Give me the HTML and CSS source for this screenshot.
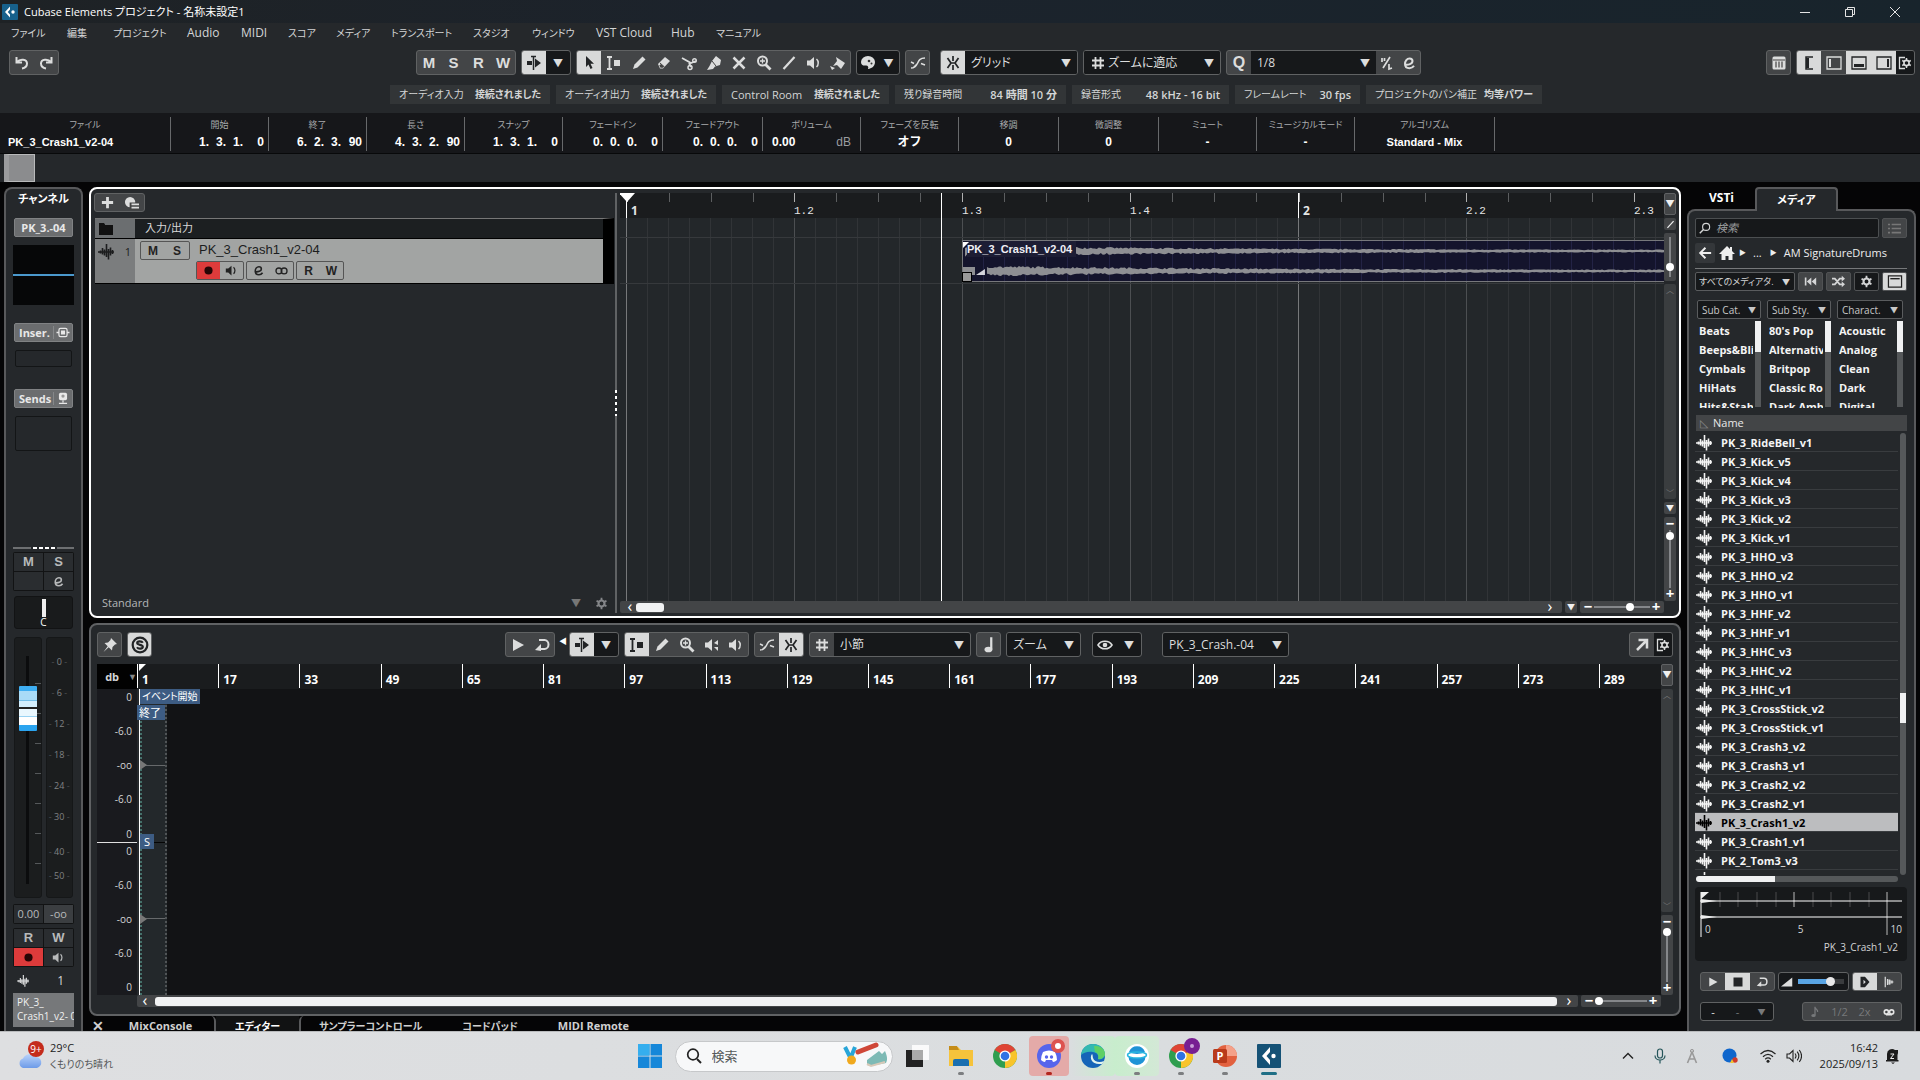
FILE: index.html
```html
<!DOCTYPE html>
<html lang="ja">
<head>
<meta charset="utf-8">
<title>Cubase Elements プロジェクト - 名称未設定1</title>
<link rel="stylesheet" href="styles.css">
</head>
<body>
<svg class="defs" aria-hidden="true">
  <symbol id="logo" viewBox="0 0 16 16"><rect width="16" height="16" rx="1" fill="#17618c"/><path d="M8 2.500 3 8l5 5.500V10.500L5.800 8 8 5.500z" fill="#fff"/><circle cx="11" cy="8" r="1.700" fill="#fff"/></symbol>
  <symbol id="undo" viewBox="0 0 16 16"><path d="M2.500 2v5.500H8M3 7c3-3.500 10-3 10 1.500 0 3-2.500 4.500-5 5" fill="none" stroke="currentColor" stroke-width="2"/></symbol>
  <symbol id="redo" viewBox="0 0 16 16"><path d="M13.500 2v5.500H8M13 7C10 3.500 3 4 3 8.500c0 3 2.500 4.500 5 5" fill="none" stroke="currentColor" stroke-width="2"/></symbol>
  <symbol id="autoscroll" viewBox="0 0 16 16"><path d="M1 6h5v4H1zM9 3.500 15 8l-6 4.500z" fill="currentColor"/><path d="M5 1.500h5M7.500 1v14" stroke="currentColor" stroke-width="1.500"/></symbol>
  <symbol id="arrow" viewBox="0 0 16 16"><path d="M5 1v11l2.500-2.500L9.500 14l2-1-2-4.200H13z" fill="currentColor"/></symbol>
  <symbol id="range" viewBox="0 0 16 16"><path d="M1 2h5M1 14h5M3.500 2v12" stroke="currentColor" stroke-width="1.800"/><path d="M8 5h6v6H8z" fill="currentColor"/></symbol>
  <symbol id="pencil" viewBox="0 0 16 16"><path d="M2 14l1.500-4.500L11.500 1.500 14.500 4.500 6.500 12.500z" fill="currentColor"/></symbol>
  <symbol id="eraser" viewBox="0 0 16 16"><path d="M2 9 9 2l5 4-7 7.500H4z" fill="currentColor"/><path d="M4 8 8.500 12" stroke="#444" stroke-width="1"/><path d="M5 9l3 2.500-1 1.200H4.600L3.300 10.500z" fill="#444"/></symbol>
  <symbol id="scissors" viewBox="0 0 16 16"><path d="M1 3l9 5 5-2M8 8l2 4" fill="none" stroke="currentColor" stroke-width="1.800"/><circle cx="9" cy="12.500" r="2" fill="none" stroke="currentColor" stroke-width="1.500"/><circle cx="13.500" cy="5.500" r="1.800" fill="none" stroke="currentColor" stroke-width="1.400"/></symbol>
  <symbol id="glue" viewBox="0 0 16 16"><path d="M6 6l4-5 5 4-1 5-5 1.500L7 14l-6 1 2.500-4z" fill="currentColor"/><path d="M6 6l4 5" stroke="#444" stroke-width="1"/></symbol>
  <symbol id="cross" viewBox="0 0 16 16"><path d="M2.500 2.500l11 11M13.500 2.500l-11 11" stroke="currentColor" stroke-width="2.500"/></symbol>
  <symbol id="zoom" viewBox="0 0 16 16"><circle cx="6.500" cy="6" r="4.500" fill="none" stroke="currentColor" stroke-width="2"/><path d="M9.500 9.500 14.500 14.500" stroke="currentColor" stroke-width="2.800"/><path d="M4 6h5M6.500 3.500v5" stroke="currentColor" stroke-width="1.300"/></symbol>
  <symbol id="line" viewBox="0 0 16 16"><path d="M2.500 14 13.500 2" stroke="currentColor" stroke-width="2.200"/></symbol>
  <symbol id="speaker" viewBox="0 0 16 16"><path d="M1 5.500h3L8 2v12l-4-3.500H1z" fill="currentColor"/><path d="M10.500 4c2.300 2 2.300 6 0 8" fill="none" stroke="currentColor" stroke-width="1.500"/></symbol>
  <symbol id="scrub" viewBox="0 0 16 16"><path d="M1 5.500h3L8 2v12l-4-3.500H1z" fill="currentColor"/><path d="M10 6l4-3v5zM10 10h4v4z" fill="currentColor"/></symbol>
  <symbol id="bucket" viewBox="0 0 16 16"><path d="M6 2l9 6-4 6-4-4-4 1 4-5z" fill="currentColor"/><path d="M0 11l5 2-3 2z" fill="currentColor"/></symbol>
  <symbol id="palette" viewBox="0 0 16 16"><path d="M1 7a7 6 0 0 1 14 0c0 5-5 7-7 7 1-2-.5-4-2.500-3.500S1 10 1 7z" fill="currentColor"/><circle cx="9" cy="6" r="1.300" fill="#333"/><circle cx="11.500" cy="8.500" r="1" fill="#333"/></symbol>
  <symbol id="xfade" viewBox="0 0 16 16"><path d="M1 13c9 0 4-10 14-10M1 7l3 1.500M11 8.500 15 10M3 13l4-4" fill="none" stroke="currentColor" stroke-width="1.500"/></symbol>
  <symbol id="snap" viewBox="0 0 16 16"><path d="M8 1v5M8 10v5M2.500 3 6 8l-3.500 5M13.500 3 10 8l3.500 5M6 8h4" fill="none" stroke="currentColor" stroke-width="1.700"/></symbol>
  <symbol id="hash" viewBox="0 0 16 16"><path d="M5.500 2v12M10.500 2v12M2 5.500h12M2 10.500h12" stroke="currentColor" stroke-width="1.800"/></symbol>
  <symbol id="edit" viewBox="0 0 16 16"><path d="M3.500 9.500c4 .5 8-.5 8-3.500 0-2-1.700-2.600-3-2.600C6 3.400 4 6 4 9s2 4.200 4.500 4.200c2 0 3.500-1 4.500-2.500" fill="none" stroke="currentColor" stroke-width="2"/></symbol>
  <symbol id="iq" viewBox="0 0 16 16"><path d="M4 13 11 2M3 3v4M5.500 3v3M10 9v5l3-1" stroke="currentColor" stroke-width="1.700" fill="none"/></symbol>
  <symbol id="rack" viewBox="0 0 16 16"><rect x="1.500" y="1.500" width="13" height="13" rx="1.500" fill="currentColor"/><path d="M2 5h12M5 6.500v6M8 6.500v6M11 6.500v6" stroke="#444" stroke-width="1.200"/></symbol>
  <symbol id="zleftbar" viewBox="0 0 16 16"><path d="M12 2H5v12h7" fill="none" stroke="currentColor" stroke-width="1.500"/><path d="M5 3h3v10H5z" fill="currentColor"/></symbol>
  <symbol id="zleft" viewBox="0 0 16 16"><path d="M1 2h14v12H1z" fill="none" stroke="currentColor" stroke-width="1.300"/><path d="M3 4h2v8H3z" fill="currentColor"/></symbol>
  <symbol id="zlow" viewBox="0 0 16 16"><path d="M1 2h14v12H1z" fill="none" stroke="currentColor" stroke-width="1.300"/><path d="M3 9h10v3H3z" fill="currentColor"/></symbol>
  <symbol id="zright" viewBox="0 0 16 16"><path d="M1 2h14v12H1z" fill="none" stroke="currentColor" stroke-width="1.300"/><path d="M11 4h2v8h-2z" fill="currentColor"/></symbol>
  <symbol id="setup" viewBox="0 0 16 16"><path d="M8 2.500H2.500v11H8" fill="none" stroke="currentColor" stroke-width="1.300"/><circle cx="9.500" cy="8" r="2.600" fill="none" stroke="currentColor" stroke-width="1.600"/><path d="M9.500 3v2.500M9.500 10.500V13M5.200 5.500l2.100 1.200M11.700 9.300l2.100 1.200M5.200 10.500l2.100-1.200M11.700 6.700l2.100-1.200" stroke="currentColor" stroke-width="1.500"/></symbol>
  <symbol id="gear" viewBox="0 0 16 16"><circle cx="8" cy="8" r="3.700" fill="none" stroke="currentColor" stroke-width="2.600"/><path d="M8 1v3M8 12v3M1.900 4.500l2.600 1.500M11.500 10l2.600 1.500M1.900 11.500l2.600-1.500M11.500 6l2.600-1.500" stroke="currentColor" stroke-width="2.200"/></symbol>
  <symbol id="plus" viewBox="0 0 16 16"><path d="M8 2v12M2 8h12" stroke="currentColor" stroke-width="3"/></symbol>
  <symbol id="preset" viewBox="0 0 16 16"><circle cx="6.500" cy="7.500" r="5.500" fill="currentColor"/><path d="M6 8h10v8H6z" fill="#444"/><path d="M8 10h8M8 13.500h8" stroke="currentColor" stroke-width="2"/></symbol>
  <symbol id="folder" viewBox="0 0 16 16"><path d="M1 3V2h5l1 1.500v.5h8v10H1z" fill="currentColor"/></symbol>
  <symbol id="wave" viewBox="0 0 16 16"><path d="M0 8h16M2.500 6.500v3M4.500 4v6.500M6.500 5.500v6M8.500 0v13M10.500 5v10.500M12.500 3.500v8M14.500 6v4" stroke="currentColor" stroke-width="1.600" fill="none"/></symbol>
  <symbol id="rec" viewBox="0 0 16 16"><circle cx="8" cy="8" r="5" fill="currentColor"/></symbol>
  <symbol id="stereo" viewBox="0 0 16 16"><circle cx="4.800" cy="8.500" r="3.600" fill="none" stroke="currentColor" stroke-width="1.600"/><circle cx="11.200" cy="8.500" r="3.600" fill="none" stroke="currentColor" stroke-width="1.600"/></symbol>
  <symbol id="insert" viewBox="0 0 16 16"><rect x="3" y="3" width="10" height="10" rx="2" fill="none" stroke="currentColor" stroke-width="1.500"/><path d="M5.500 5.500h5v5h-5zM0 7h3v2H0zM13 7h3v2h-3z" fill="currentColor"/></symbol>
  <symbol id="send" viewBox="0 0 16 16"><rect x="3" y="1" width="10" height="9" rx="2" fill="currentColor"/><path d="M8 10v3M3 14h10" stroke="currentColor" stroke-width="1.500"/><circle cx="8" cy="5" r="2" fill="#999"/></symbol>
  <symbol id="pin" viewBox="0 0 16 16"><path d="M9 1l6 6-2 .5-2.500 2.500-.5 3.500L6.700 10.300 1.500 15 5.700 9.300 2.500 6 6 5.500 8.500 3z" fill="currentColor"/></symbol>
  <symbol id="solo" viewBox="0 0 16 16"><circle cx="8" cy="8" r="6.500" fill="none" stroke="currentColor" stroke-width="2"/><path d="M10.500 6C9.500 4.300 5.500 4.300 5.500 6.300s5 1.200 5 3.300-4 2.200-5.200.4" fill="none" stroke="currentColor" stroke-width="1.900"/></symbol>
  <symbol id="play" viewBox="0 0 16 16"><path d="M3 2l11 6-11 6z" fill="currentColor"/></symbol>
  <symbol id="stop" viewBox="0 0 16 16"><path d="M2 2h12v12H2z" fill="currentColor"/></symbol>
  <symbol id="loop" viewBox="0 0 16 16"><path d="M5 3h5.500a4 4.500 0 0 1 0 9H5" fill="none" stroke="currentColor" stroke-width="2"/><path d="M7 7v7l-6-1z" fill="currentColor"/></symbol>
  <symbol id="note" viewBox="0 0 16 16"><path d="M10 1v11" stroke="currentColor" stroke-width="2"/><ellipse cx="7.500" cy="12" rx="3.500" ry="2.500" fill="currentColor"/></symbol>
  <symbol id="eighth" viewBox="0 0 16 16"><path d="M8 1v11M8 2c1 3 4 2 3.500 6" stroke="currentColor" stroke-width="1.700" fill="none"/><ellipse cx="6" cy="12.500" rx="3" ry="2" fill="currentColor"/></symbol>
  <symbol id="eye" viewBox="0 0 16 16"><path d="M1 8c3-5 11-5 14 0-3 5-11 5-14 0z" fill="none" stroke="currentColor" stroke-width="1.600"/><circle cx="8" cy="8" r="2.300" fill="currentColor"/></symbol>
  <symbol id="open" viewBox="0 0 16 16"><path d="M3 13 12 4M4.500 3h8.500v8.500" fill="none" stroke="currentColor" stroke-width="2.500"/></symbol>
  <symbol id="search" viewBox="0 0 16 16"><circle cx="9.500" cy="6.500" r="4.700" fill="none" stroke="currentColor" stroke-width="1.500"/><path d="M6 10 1 15" stroke="currentColor" stroke-width="1.800"/></symbol>
  <symbol id="list" viewBox="0 0 16 16"><path d="M0 3h2.500M4.500 3H16M0 8h2.500M4.500 8H16M0 13h2.500M4.500 13H16" stroke="currentColor" stroke-width="2"/></symbol>
  <symbol id="back" viewBox="0 0 16 16"><path d="M8.500 2 2.500 8l6 6M2.500 8H15" fill="none" stroke="currentColor" stroke-width="2.200"/></symbol>
  <symbol id="home" viewBox="0 0 16 16"><path d="M8 1 0 9h2.500v6h4v-4h3v4h4V9H16l-3-3V2h-2v2z" fill="currentColor"/></symbol>
  <symbol id="rewind" viewBox="0 0 16 16"><path d="M1 3h2v10H1zM9 3v10L3.500 8zM15 3v10L9.500 8z" fill="currentColor"/></symbol>
  <symbol id="shuffle" viewBox="0 0 16 16"><path d="M0 4.500h3.500l6 7H13M0 11.500h3.500l6-7H13" fill="none" stroke="currentColor" stroke-width="2.200"/><path d="M12 1l4 3.500L12 8zM12 8l4 3.500-4 3.500z" fill="currentColor"/></symbol>
  <symbol id="windowic" viewBox="0 0 16 16"><path d="M1 2h14v12H1z" fill="none" stroke="currentColor" stroke-width="1.300"/><path d="M3 5h10" stroke="currentColor" stroke-width="1.500"/></symbol>
  <symbol id="ramp" viewBox="0 0 16 16"><path d="M0 14h15V2z" fill="currentColor"/></symbol>
  <symbol id="autoplay" viewBox="0 0 16 16"><path d="M2 1h6l6 7-6 7H2zM6 5v6l3-3z" fill="currentColor" fill-rule="evenodd"/></symbol>
  <symbol id="beats" viewBox="0 0 16 16"><path d="M3 1v14M6 4v8M9 4.500v7M12 6v4" stroke="currentColor" stroke-width="1.600" fill="none"/><path d="M6 4l9 4-9 4z" fill="currentColor" opacity=".6"/></symbol>
  <symbol id="tape" viewBox="0 0 16 16"><circle cx="4.500" cy="8" r="2.800" fill="none" stroke="currentColor" stroke-width="2.200"/><circle cx="11.500" cy="8" r="2.800" fill="none" stroke="currentColor" stroke-width="2.200"/><path d="M4 11.500h8" stroke="currentColor" stroke-width="2"/></symbol>
  <symbol id="chrome" viewBox="0 0 24 24"><circle cx="12" cy="12" r="12" fill="#2f9e4f"/><path d="M12 12 1.600 6A12 12 0 0 1 22.400 6z" fill="#df4435"/><path d="M12 12 22.400 6A12 12 0 0 1 12 24z" fill="#f8c42b"/><circle cx="12" cy="12" r="5.600" fill="#fff"/><circle cx="12" cy="12" r="4.300" fill="#2f72e4"/></symbol>
</svg>

<header class="titlebar">
  <svg class="ic"><use href="#logo"/></svg>
  <h1>Cubase Elements プロジェクト - 名称未設定1</h1>
  <div class="winbtns">
    <button aria-label="最小化"><svg viewBox="0 0 10 10"><path d="M0 5.500h10"/></svg></button>
    <button aria-label="元に戻す"><svg viewBox="0 0 10 10"><path d="M.5 2.500h7v7h-7zM2.500 2.500v-2h7v7h-2"/></svg></button>
    <button aria-label="閉じる"><svg viewBox="0 0 10 10"><path d="M0 0l10 10M10 0 0 10"/></svg></button>
  </div>
</header>
<nav class="menubar">
  <a href="#">ファイル</a><a href="#">編集</a><a href="#">プロジェクト</a><a href="#" class="lat">Audio</a><a href="#" class="lat">MIDI</a><a href="#">スコア</a><a href="#">メディア</a><a href="#">トランスポート</a><a href="#">スタジオ</a><a href="#">ウィンドウ</a><a href="#" class="lat">VST Cloud</a><a href="#" class="lat">Hub</a><a href="#">マニュアル</a>
</nav>

<div class="toolbar">
  <div class="grp"><button aria-label="元に戻す"><svg class="ic"><use href="#undo"/></svg></button><button aria-label="やり直す"><svg class="ic"><use href="#redo"/></svg></button></div>
  <div class="tools">
    <div class="grp bold"><button>M</button><button>S</button><button>R</button><button>W</button></div>
    <div class="grp dark"><button class="on" aria-label="オートスクロール"><svg class="ic"><use href="#autoscroll"/></svg></button><button class="tri">▼</button></div>
    <div class="grp pick">
      <button class="on" aria-label="選択"><svg class="ic"><use href="#arrow"/></svg></button><button aria-label="範囲"><svg class="ic"><use href="#range"/></svg></button><button aria-label="鉛筆"><svg class="ic"><use href="#pencil"/></svg></button><button aria-label="消しゴム"><svg class="ic"><use href="#eraser"/></svg></button><button aria-label="はさみ"><svg class="ic"><use href="#scissors"/></svg></button><button aria-label="のり"><svg class="ic"><use href="#glue"/></svg></button><button aria-label="ミュート"><svg class="ic"><use href="#cross"/></svg></button><button aria-label="ズーム"><svg class="ic"><use href="#zoom"/></svg></button><button aria-label="ライン"><svg class="ic"><use href="#line"/></svg></button><button aria-label="再生"><svg class="ic"><use href="#speaker"/></svg></button><button aria-label="カラー"><svg class="ic"><use href="#bucket"/></svg></button>
    </div>
    <div class="grp dark color"><button aria-label="カラーメニュー"><svg class="ic"><use href="#palette"/></svg></button><button class="tri">▼</button></div>
    <div class="grp"><button aria-label="ゼロクロス"><svg class="ic"><use href="#xfade"/></svg></button></div>
    <div class="grp dark snapg"><button class="on" aria-label="スナップ"><svg class="ic"><use href="#snap"/></svg></button><label class="sel w112"><select aria-label="スナップ形式"><option>グリッド</option></select></label></div>
    <div class="grp dark"><label class="sel w138"><svg class="ic"><use href="#hash"/></svg><select aria-label="グリッドの間隔"><option>ズームに適応</option></select></label></div>
    <div class="grp"><button class="q">Q</button><label class="sel w125"><select aria-label="クオンタイズ"><option>1/8</option></select></label><button class="sm" aria-label="反復クオンタイズ"><svg class="ic"><use href="#iq"/></svg></button><button class="sm" aria-label="クオンタイズパネル"><svg class="ic"><use href="#edit"/></svg></button></div>
  </div>
  <div class="tools right">
    <div class="grp"><button aria-label="チャンネルラック"><svg class="ic"><use href="#rack"/></svg></button></div>
    <div class="grp"><button class="on" aria-label="チャンネル"><svg class="ic"><use href="#zleftbar"/></svg></button><button aria-label="左ゾーン"><svg class="ic"><use href="#zleft"/></svg></button><button class="on" aria-label="下ゾーン"><svg class="ic"><use href="#zlow"/></svg></button><button class="on" aria-label="右ゾーン"><svg class="ic"><use href="#zright"/></svg></button><button class="set" aria-label="設定"><svg class="ic"><use href="#setup"/></svg></button></div>
  </div>
</div>

<div class="status">
  <div><span>オーディオ入力</span><b>接続されました</b></div>
  <div><span>オーディオ出力</span><b>接続されました</b></div>
  <div><span class="lat">Control Room</span><b>接続されました</b></div>
  <div><span>残り録音時間</span><b class="lat">84 時間 10 分</b></div>
  <div><span>録音形式</span><b class="lat">48 kHz - 16 bit</b></div>
  <div><span>フレームレート</span><b class="lat">30 fps</b></div>
  <div><span>プロジェクトのパン補正</span><b>均等パワー</b></div>
</div>

<div class="info">
  <div class="l"><span>ファイル</span><b>PK_3_Crash1_v2-04</b></div>
  <div class="n"><span>開始</span><b><i>1.</i><i>3.</i><i>1.</i><i>0</i></b></div>
  <div class="n"><span>終了</span><b><i>6.</i><i>2.</i><i>3.</i><i>90</i></b></div>
  <div class="n"><span>長さ</span><b><i>4.</i><i>3.</i><i>2.</i><i>90</i></b></div>
  <div class="n"><span>スナップ</span><b><i>1.</i><i>3.</i><i>1.</i><i>0</i></b></div>
  <div class="n"><span>フェードイン</span><b><i>0.</i><i>0.</i><i>0.</i><i>0</i></b></div>
  <div class="n"><span>フェードアウト</span><b><i>0.</i><i>0.</i><i>0.</i><i>0</i></b></div>
  <div class="v"><span>ボリューム</span><b>0.00<em>dB</em></b></div>
  <div><span>フェーズを反転</span><b>オフ</b></div>
  <div><span>移調</span><b>0</b></div>
  <div><span>微調整</span><b>0</b></div>
  <div><span>ミュート</span><b>-</b></div>
  <div><span>ミュージカルモード</span><b>-</b></div>
  <div class="alg"><span>アルゴリズム</span><b>Standard - Mix</b></div>
</div>
<div class="overview"><div class="view"></div></div>

<main>
  <aside class="channel">
    <h2>チャンネル</h2>
    <button class="tag">PK_3.-04</button>
    <div class="eq"></div>
    <button class="tag split"><span>Inser.</span><svg class="ic"><use href="#insert"/></svg></button>
    <div class="slot"></div>
    <button class="tag split sends"><span>Sends</span><svg class="ic"><use href="#send"/></svg></button>
    <div class="slot tall"></div>
    <div class="grip"><i></i><u></u><i></i></div>
    <div class="quad"><button>M</button><button>S</button><button aria-label="空き"></button><button aria-label="編集"><svg class="ic"><use href="#edit"/></svg></button></div>
    <div class="pan"><i></i><span>C</span></div>
    <div class="faders">
      <div class="fader"><input type="range" aria-label="ボリューム" min="0" max="100" value="84"></div>
      <div class="meter"><span>0</span><span>6</span><span>12</span><span>18</span><span>24</span><span>30</span><span class="f">40</span><span>50</span></div>
    </div>
    <div class="quad vals"><span>0.00</span><span class="pk">-oo</span></div>
    <div class="quad rw"><button>R</button><button>W</button><button class="rec" aria-label="録音可能"><svg class="ic"><use href="#rec"/></svg></button><button aria-label="モニター"><svg class="ic"><use href="#speaker"/></svg></button></div>
    <div class="chno"><svg class="ic"><use href="#wave"/></svg><span>1</span></div>
    <div class="chname">PK_3_<br>Crash1_v2- 0</div>
  </aside>

  <div class="center">
    <section class="project">
      <div class="tracks">
        <div class="grp add"><button aria-label="トラックを追加"><svg class="ic"><use href="#plus"/></svg></button><button aria-label="プリセット"><svg class="ic"><use href="#preset"/></svg></button></div>
        <div class="row io"><div class="num"><svg class="ic"><use href="#folder"/></svg></div><span>入力/出力</span></div>
        <div class="row trk">
          <div class="num"><svg class="ic"><use href="#wave"/></svg><span>1</span></div>
          <div class="ms tb"><button>M</button><button>S</button></div>
          <div class="det"><div class="nm">PK_3_Crash1_v2-04</div>
            <div class="btns"><div class="tb"><button class="rec" aria-label="録音"><svg class="ic"><use href="#rec"/></svg></button><button aria-label="モニター"><svg class="ic"><use href="#speaker"/></svg></button></div><div class="tb"><button aria-label="編集"><svg class="ic"><use href="#edit"/></svg></button><button aria-label="ステレオ"><svg class="ic"><use href="#stereo"/></svg></button></div><div class="tb"><button>R</button><button>W</button></div></div>
          </div>
        </div>
        <div class="foot"><span>Standard</span><b>▼</b><svg class="ic"><use href="#gear"/></svg></div>
      </div>
      <div class="divider"></div>
      <div class="arrange">
        <div class="ruler"><b>1</b><span>1.2</span><span>1.3</span><span>1.4</span><b>2</b><span>2.2</span><span>2.3</span></div>
        <div class="canvas">
          <div class="event"><svg id="clip" viewBox="0 0 702 40" preserveAspectRatio="none"></svg><span>PK_3_Crash1_v2-04</span></div>
        </div>
        <div class="hbar"><div class="hscroll"><i>‹</i><u></u><i>›</i></div><button class="drop">▼</button><div class="hz"><i>−</i><input type="range" aria-label="横ズーム" value="66"><i>+</i></div></div>
        <div class="playhead"></div>
      </div>
      <div class="vbar">
        <button class="drop tall">▼</button><button class="drop" aria-label="鉛筆"><svg class="ic"><use href="#line"/></svg></button>
        <div class="vz first"><input type="range" aria-label="波形ズーム" value="20"></div>
        <div class="vscroll"><i>︿</i><i>﹀</i></div>
        <button class="drop">▼</button>
        <div class="vz z"><i>−</i><input type="range" aria-label="縦ズーム" value="96"><i>+</i></div>
      </div>
    </section>

    <section class="editor">
      <div class="etools">
        <div class="grp"><button aria-label="ピン"><svg class="ic"><use href="#pin"/></svg></button></div>
        <div class="grp"><button class="on" aria-label="ソロ"><svg class="ic big"><use href="#solo"/></svg></button></div>
        <div class="mid">
          <div class="grp"><button aria-label="再生"><svg class="ic"><use href="#play"/></svg></button><button aria-label="ループ"><svg class="ic"><use href="#loop"/></svg></button></div><i class="volt">◀</i>
          <div class="grp dark"><button class="on" aria-label="オートスクロール"><svg class="ic"><use href="#autoscroll"/></svg></button><button class="tri">▼</button></div>
          <div class="grp"><button class="on" aria-label="範囲"><svg class="ic"><use href="#range"/></svg></button><button aria-label="鉛筆"><svg class="ic"><use href="#pencil"/></svg></button><button aria-label="ズーム"><svg class="ic"><use href="#zoom"/></svg></button><button aria-label="スクラブ"><svg class="ic"><use href="#scrub"/></svg></button><button aria-label="試聴"><svg class="ic"><use href="#speaker"/></svg></button></div>
          <div class="grp"><button aria-label="ゼロクロス"><svg class="ic"><use href="#xfade"/></svg></button><button class="on" aria-label="スナップ"><svg class="ic"><use href="#snap"/></svg></button></div>
          <div class="grp"><button aria-label="グリッド"><svg class="ic"><use href="#hash"/></svg></button><label class="sel w138"><select aria-label="小節"><option>小節</option></select></label></div>
          <div class="grp"><button aria-label="音符"><svg class="ic big"><use href="#note"/></svg></button></div>
          <div class="grp"><label class="sel w75"><select aria-label="ズーム"><option>ズーム</option></select></label></div>
          <div class="grp dark eye"><button aria-label="表示"><svg class="ic"><use href="#eye"/></svg></button><button class="tri">▼</button></div>
          <div class="grp file"><label class="sel w125"><select aria-label="クリップ"><option>PK_3_Crash.-04</option></select></label></div>
        </div>
        <div class="grp end"><button aria-label="別ウィンドウ"><svg class="ic"><use href="#open"/></svg></button><button class="set" aria-label="設定"><svg class="ic"><use href="#setup"/></svg></button></div>
      </div>
      <div class="ebody">
        <div class="scale">
          <div class="db">db<b>▼</b></div>
          <div class="vals"><span>0</span><span>-6.0</span><span>-oo</span><span>-6.0</span><span>0</span></div>
          <div class="vals second"><span>0</span><span>-6.0</span><span>-oo</span><span>-6.0</span><span>0</span></div>
        </div>
        <div class="sample">
          <div class="bars"><span>1</span><span>17</span><span>33</span><span>49</span><span>65</span><span>81</span><span>97</span><span>113</span><span>129</span><span>145</span><span>161</span><span>177</span><span>193</span><span>209</span><span>225</span><span>241</span><span>257</span><span>273</span><span class="last">289</span></div>
          <div class="wavearea">
            <div class="region"><div class="lane"></div><div class="lane"></div></div>
            <span class="mk start">イベント開始</span><span class="mk stop">終了</span><span class="mk s">S</span>
          </div>
          <div class="hbar"><div class="hscroll full"><i>‹</i><u></u><i>›</i></div><div class="hz"><i>−</i><input type="range" aria-label="横ズーム" value="0"><i>+</i></div></div>
        </div>
        <div class="vbar">
          <button class="drop tall">▼</button>
          <div class="vscroll"><i>︿</i><i>﹀</i></div>
          <div class="vz z"><i>−</i><input type="range" aria-label="縦ズーム" value="100"><i>+</i></div>
        </div>
      </div>
    </section>

    <nav class="tabs"><button class="x">✕</button><a href="#" class="t1 lat">MixConsole</a><a href="#" class="cur">エディター</a><div class="rest"><a href="#">サンプラーコントロール</a><a href="#">コードパッド</a><a href="#" class="lat">MIDI Remote</a></div></nav>
  </div>

  <aside class="media">
    <div class="mtabs"><a href="#">VSTi</a><a href="#" class="cur">メディア</a></div>
    <div class="mbody">
      <div class="line"><label class="search"><svg class="ic"><use href="#search"/></svg><input type="text" placeholder="検索" aria-label="検索"></label><div class="mb dim"><button aria-label="一覧"><svg class="ic"><use href="#list"/></svg></button></div></div>
      <div class="path"><button aria-label="戻る"><svg class="ic"><use href="#back"/></svg></button><svg class="ic home"><use href="#home"/></svg><i>▶</i><span>...</span><i>▶</i><span>AM SignatureDrums</span></div>
      <div class="line types"><label class="sel box"><select aria-label="メディアタイプ"><option>すべてのメディアタ.</option></select></label><div class="mb"><button aria-label="先頭"><svg class="ic"><use href="#rewind"/></svg></button></div><div class="mb"><button aria-label="シャッフル"><svg class="ic"><use href="#shuffle"/></svg></button></div><div class="mb dk"><button aria-label="設定"><svg class="ic"><use href="#gear"/></svg></button></div><div class="mb lit"><button aria-label="フィルター"><svg class="ic big"><use href="#windowic"/></svg></button></div></div>
      <div class="filters">
        <div><label class="sel box"><select aria-label="Sub Category"><option>Sub Cat.</option></select></label><ul><li>Beats</li><li>Beeps&amp;Blips</li><li>Cymbals</li><li>HiHats</li><li>Hits&amp;Stabs</li></ul></div>
        <div><label class="sel box"><select aria-label="Sub Style"><option>Sub Sty.</option></select></label><ul><li>80's Pop</li><li>Alternative</li><li>Britpop</li><li>Classic Rock</li><li>Dark Ambient</li></ul></div>
        <div><label class="sel box"><select aria-label="Character"><option>Charact.</option></select></label><ul><li>Acoustic</li><li>Analog</li><li>Clean</li><li>Dark</li><li>Digital</li></ul></div>
      </div>
      <div class="results">
        <div class="rhead"><i>◺</i>Name</div>
        <div class="rwrap">
          <div class="rlist"><table><tbody>
            <tr><td><svg class="ic"><use href="#wave"/></svg></td><td>PK_3_RideBell_v1</td></tr>
            <tr><td><svg class="ic"><use href="#wave"/></svg></td><td>PK_3_Kick_v5</td></tr>
            <tr><td><svg class="ic"><use href="#wave"/></svg></td><td>PK_3_Kick_v4</td></tr>
            <tr><td><svg class="ic"><use href="#wave"/></svg></td><td>PK_3_Kick_v3</td></tr>
            <tr><td><svg class="ic"><use href="#wave"/></svg></td><td>PK_3_Kick_v2</td></tr>
            <tr><td><svg class="ic"><use href="#wave"/></svg></td><td>PK_3_Kick_v1</td></tr>
            <tr><td><svg class="ic"><use href="#wave"/></svg></td><td>PK_3_HHO_v3</td></tr>
            <tr><td><svg class="ic"><use href="#wave"/></svg></td><td>PK_3_HHO_v2</td></tr>
            <tr><td><svg class="ic"><use href="#wave"/></svg></td><td>PK_3_HHO_v1</td></tr>
            <tr><td><svg class="ic"><use href="#wave"/></svg></td><td>PK_3_HHF_v2</td></tr>
            <tr><td><svg class="ic"><use href="#wave"/></svg></td><td>PK_3_HHF_v1</td></tr>
            <tr><td><svg class="ic"><use href="#wave"/></svg></td><td>PK_3_HHC_v3</td></tr>
            <tr><td><svg class="ic"><use href="#wave"/></svg></td><td>PK_3_HHC_v2</td></tr>
            <tr><td><svg class="ic"><use href="#wave"/></svg></td><td>PK_3_HHC_v1</td></tr>
            <tr><td><svg class="ic"><use href="#wave"/></svg></td><td>PK_3_CrossStick_v2</td></tr>
            <tr><td><svg class="ic"><use href="#wave"/></svg></td><td>PK_3_CrossStick_v1</td></tr>
            <tr><td><svg class="ic"><use href="#wave"/></svg></td><td>PK_3_Crash3_v2</td></tr>
            <tr><td><svg class="ic"><use href="#wave"/></svg></td><td>PK_3_Crash3_v1</td></tr>
            <tr><td><svg class="ic"><use href="#wave"/></svg></td><td>PK_3_Crash2_v2</td></tr>
            <tr><td><svg class="ic"><use href="#wave"/></svg></td><td>PK_3_Crash2_v1</td></tr>
            <tr class="hit"><td><svg class="ic"><use href="#wave"/></svg></td><td>PK_3_Crash1_v2</td></tr>
            <tr><td><svg class="ic"><use href="#wave"/></svg></td><td>PK_3_Crash1_v1</td></tr>
            <tr><td><svg class="ic"><use href="#wave"/></svg></td><td>PK_2_Tom3_v3</td></tr>
            <tr><td><svg class="ic"><use href="#wave"/></svg></td><td></td></tr>
          </tbody></table></div>
          <div class="rscroll"></div>
        </div>
        <div class="rh"></div>
      </div>
      <div class="preview">
        <svg viewBox="0 0 202 46" preserveAspectRatio="none"><path d="M20 1v15M38 1v15M57 1v15M76 1v15M113 1v15M131 1v15M150 1v15M169 1v15" stroke="#4a4b4d"/><path d="M94 1v15M187 1v43" stroke="#bbb"/><path d="M1 1v45M0 10h202M0 26h202" stroke="#fff" fill="none"/><path d="M1 1h8L1 8zM1 8l16 2-16 2zM1 24l16 2-16 2z" fill="#eee"/></svg>
        <div class="marks"><span>0</span><span>5</span><span>10</span></div>
        <p>PK_3_Crash1_v2</p>
      </div>
      <div class="pctl">
        <div class="grp"><button aria-label="再生"><svg class="ic"><use href="#play"/></svg></button><button class="on" aria-label="停止"><svg class="ic"><use href="#stop"/></svg></button><button aria-label="ループ"><svg class="ic"><use href="#loop"/></svg></button></div>
        <div class="grp dark vol"><svg class="ic"><use href="#ramp"/></svg><input type="range" aria-label="試聴レベル" value="76"></div>
        <div class="grp"><button class="on" aria-label="自動再生"><svg class="ic"><use href="#autoplay"/></svg></button><button aria-label="ビート"><svg class="ic"><use href="#beats"/></svg></button></div>
      </div>
      <div class="pctl low">
        <div class="grp dark key"><button class="wt">-</button><button>-</button><button>▼</button></div>
        <div class="grp rate"><button aria-label="音符"><svg class="ic"><use href="#eighth"/></svg></button><button>1/2</button><button>2x</button><button class="wt" aria-label="テープ"><svg class="ic"><use href="#tape"/></svg></button></div>
      </div>
    </div>
  </aside>
</main>

<footer class="taskbar">
  <div class="weather"><svg viewBox="0 0 28 28"><defs><linearGradient id="cl" x2="0" y2="1"><stop stop-color="#b8d2fa"/><stop offset="1" stop-color="#6d9be8"/></linearGradient></defs><path d="M6 27a5 5 0 0 1 0-9.500A7 7 0 0 1 18 16a5.600 5.600 0 0 1 2 11z" fill="url(#cl)"/><circle cx="19" cy="8" r="8" fill="#c42b1c"/><text x="19" y="12" text-anchor="middle" class="badge">9+</text></svg><p><span>29°C</span><span>くもりのち晴れ</span></p></div>
  <div class="apps">
    <button aria-label="スタート"><svg viewBox="0 0 24 24"><path d="M0 0h11.500v11.500H0zM12.500 0H24v11.500H12.500zM0 12.500h11.500V24H0zM12.500 12.500H24V24H12.500z" fill="#1687d9"/><path d="M0 0h11.500v11.500H0z" fill="#35aeee"/></svg></button>
    <label class="tsearch"><svg class="ic" viewBox="0 0 16 16"><circle cx="7" cy="6.500" r="5.300" fill="none" stroke="#222" stroke-width="1.700"/><path d="M11 11l4 4" stroke="#222" stroke-width="2"/></svg><input type="text" placeholder="検索" aria-label="Windows 検索"><svg class="deco" viewBox="0 0 46 30"><path d="M2 6l5 10M12 6 8 16" stroke="#28a5d8" stroke-width="4"/><circle cx="8.500" cy="19" r="4.500" fill="#f0a91e"/><path d="M15 11 33 4" stroke="#cf4738" stroke-width="5" stroke-linecap="round"/><path d="M24 19 36 10l3 3 3-3c2 5 3 8 1 12L28 25l-4-1z" fill="#7dbab5"/><path d="M24 23l4 2 14-4" stroke="#d8c9b8" stroke-width="2" fill="none"/></svg></label>
    <button aria-label="タスクビュー"><svg viewBox="0 0 24 24"><path d="M1 6h17v17H1z" fill="#222"/><path d="M7 1h17v15H7z" fill="#fff" opacity=".85"/><path d="M7 6h11v10H7z" fill="#aaa"/></svg></button>
    <button class="run" aria-label="エクスプローラー"><svg viewBox="0 0 24 24"><path d="M0 3h9l3 3h12v16H0z" fill="#f6c33b"/><path d="M0 2h8l2 4H0z" fill="#c58c18"/><path d="M4 22v-5a2 2 0 0 1 2-2h12a2 2 0 0 1 2 2v5z" fill="#1a6fb0"/></svg></button>
    <button aria-label="Chrome"><svg viewBox="0 0 24 24"><use href="#chrome"/></svg></button>
    <button class="run alert" aria-label="Discord"><svg viewBox="0 0 24 24"><circle cx="12" cy="12" r="12" fill="#5765ec"/><path d="M6 8q6-3 12 0 2 4 2 8-2 2-4 2l-1-2H9l-1 2q-2 0-4-2 0-4 2-8z" fill="#fff"/><circle cx="9.500" cy="13" r="1.700" fill="#5765ec"/><circle cx="14.500" cy="13" r="1.700" fill="#5765ec"/></svg><i></i></button>
    <button class="green" aria-label="Edge"><svg viewBox="0 0 24 24"><circle cx="12" cy="12" r="12" fill="#1565b8"/><path d="M0 11C1 3 7 0 12 0c8 0 12 6 12 10s-4 6-7 5c1-3 0-6-5-7C7 7 2 9 0 11z" fill="#33b9b0"/><path d="M13 2c8-1 11 5 11 8s-4 6-7 5c1-3 0-6-3-7z" fill="#5fd065"/><path d="M11 10c-3 4 0 10 7 10h3q2-2 2-3c-4 2-10 1-11-3-.5-2 0-3-1-4z" fill="#dff3ee"/></svg></button>
    <button class="run green2" aria-label="ブラウザ"><svg viewBox="0 0 24 24"><circle cx="12" cy="12" r="12" fill="#fff"/><path d="M4 8a8.500 8.500 0 0 1 16 0q-8 4-16 0zM3.500 12.500q8.500 3 17 0a8.500 8.500 0 0 1-17 0z" fill="#1f93d6"/><ellipse cx="12" cy="11" rx="9.500" ry="3" fill="none" stroke="#28b6e0" stroke-width="1.500"/></svg></button>
    <button class="run" aria-label="Chrome プロフィール"><svg viewBox="0 0 24 24"><use href="#chrome"/></svg><i class="pf"></i></button>
    <button class="run" aria-label="PowerPoint"><svg viewBox="0 0 24 24"><circle cx="13" cy="12" r="11" fill="#e2613f"/><path d="M13 1a11 11 0 0 1 11 11H13z" fill="#f4a189"/><rect y="5" width="14" height="14" rx="1.500" fill="#b93a1b"/><text x="7" y="16" text-anchor="middle" class="pp">P</text></svg></button>
    <button class="run cur" aria-label="Cubase"><svg viewBox="0 0 24 24"><rect width="24" height="24" rx="1" fill="#155276"/><path d="M13 3 5 12l8 9v-5l-3.500-4L13 8z" fill="#fff"/><circle cx="16.500" cy="12" r="2.200" fill="#fff"/></svg></button>
  </div>
  <div class="tray">
    <svg viewBox="0 0 16 16"><path d="M3 10.500 8 5.500l5 5" fill="none" stroke="#222" stroke-width="1.400"/></svg>
    <svg viewBox="0 0 16 16"><rect x="5.500" y="1" width="5" height="9" rx="2.500" fill="none" stroke="#24555a" stroke-width="1.200"/><path d="M3 7.500c0 6 10 6 10 0M8 12v3.500" fill="none" stroke="#24555a" stroke-width="1.200"/></svg>
    <svg viewBox="0 0 16 16"><path d="M3.500 15 8 4l4.500 11M5.500 11h5" fill="none" stroke="#999" stroke-width="1.600"/><circle cx="8" cy="3" r="1.600" fill="none" stroke="#999"/></svg>
    <svg class="ball" viewBox="0 0 16 16"><circle cx="7.500" cy="7.500" r="7" fill="#0f66cc"/><circle cx="13" cy="12" r="2.700" fill="#d13b2a"/><path d="M8 15l2-4 2 4z" fill="#f2c230"/></svg>
    <svg class="wifi" viewBox="0 0 16 16"><path d="M.5 6q7.500-7 15 0M3 8.700q5-4.700 10 0M5.200 11.200q2.800-2.600 5.600 0" fill="none" stroke="#222" stroke-width="1.200"/><circle cx="8" cy="13.300" r="1.500" fill="#222"/></svg>
    <svg viewBox="0 0 16 16"><path d="M1 6h2.500L7 2.500v11L3.500 10H1zM9 5.500q2 2.500 0 5M11.200 3.700q3.300 4.300 0 8.600M13.300 2q4.500 6 0 12" fill="none" stroke="#222" stroke-width="1.100"/></svg>
    <p><span>16:42</span><span>2025/09/13</span></p>
    <svg viewBox="0 0 16 16"><path d="M2 12V6a5 5 0 0 1 8-4h3v3l-.5 2v5h1v1.500H1V12zM6 14.500h4L8 16z" fill="#1c1c1c"/><path d="M5.500 6H9l-3.500 4.500H9" stroke="#eee" fill="none"/></svg>
  </div>
</footer>
<script src="script.js"></script>
</body>
</html>
```
FILE: styles.css
```css
* { box-sizing: border-box; }
body {
  margin: 0; height: 100vh; overflow: hidden; display: flex; flex-direction: column;
  background: #050506; color: #d4d5d6;
  font: 12px/16px "Open Sans", "Noto Sans CJK JP", sans-serif;
  font-feature-settings: "palt";
}
button, input, select { font: inherit; color: inherit; font-feature-settings: inherit; }
button { background: none; border: 0; padding: 0; display: flex; align-items: center; justify-content: center; }
a { color: inherit; text-decoration: none; }
h1, h2, p, ul { margin: 0; padding: 0; font-size: 12px; font-weight: 400; list-style: none; }
i, em, u { font-style: normal; text-decoration: none; }
.defs { position: absolute; width: 0; height: 0; }
.ic { width: 16px; height: 16px; flex: none; display: block; }
.ic.big { width: 18px; height: 18px; }

/* window frame */
.titlebar { height: 23px; display: flex; align-items: center; gap: 6px; padding: 0 3px 0 2px; background: linear-gradient(90deg, #1e2225, #1c232c 40%, #18242c); color: #fff; flex: none; }
.titlebar h1 { font-size: 11px; }
.winbtns { margin-left: auto; display: flex; }
.winbtns button { width: 45px; height: 22px; }
.winbtns svg { width: 10px; height: 10px; fill: none; stroke: #e4e4e4; }
.menubar { height: 20px; flex: none; background: #25282b; display: grid; padding-left: 11px; font-size: 10px; line-height: 20px;
  grid-template-columns: 56px 46px 74px 54px 47px 48px 55px 82px 59px 64px 75px 45px 60px; white-space: nowrap; }
.menubar .lat { font-size: 12px; }

/* toolbar */
.toolbar { flex: none; height: 38px; padding: 7px 5px 0 9px; display: flex; align-items: flex-start; background: #25282b; }
.tools { display: flex; gap: 5px; margin: 0 auto; padding-left: 12px; }
.tools.right { margin: 0; padding: 0; }
.grp { display: flex; height: 25px; border: 1px solid #606263; border-radius: 3px; background: #434547; overflow: hidden; color: #dcdddd; flex: none; }
.grp button { width: 25px; height: 100%; flex: none; }
.grp button:first-child, .grp button:last-child { width: 24px; }
.grp button:only-child { width: 23px; }
.grp .on { background: #d8d9d9; color: #222426; }
.grp.dark, .grp .sel, .grp .set { background: #16181a; }
.grp .set:last-child { width: 18px; }
.bold { font: bold 15px/20px "Liberation Sans", sans-serif; }
.tri { font-size: 10px; }
.color button:first-child, .color button:last-child { width: 21px; }
.snapg { margin-left: 5px; }
.grp .q { font: bold 16px/20px "Liberation Sans", sans-serif; }
.grp .sm, .grp .sm:last-child { width: 22px; }
.sel { display: flex; align-items: center; position: relative; padding-left: 6px; gap: 2px; }
.sel::after { content: "▼"; position: absolute; right: 6px; font-size: 10px; pointer-events: none; }
.sel select { appearance: none; background: none; border: 0; padding: 0; width: 100%; outline: 0; }
.w75 { width: 73px; } .w112 { width: 112px; } .w125 { width: 125px; } .w138 { width: 136px; }

.status { flex: none; height: 32px; padding: 4px 0 0 12px; background: #25282b; display: grid; justify-content: center; gap: 6px;
  grid-template-columns: 160px 160px 167px 171px 157px 125px 176px; grid-template-rows: 19px; white-space: nowrap; font-size: 10px; line-height: 19px; }
.status div { background: #323537; display: flex; justify-content: space-between; padding: 0 9px; }
.status b { font-weight: 600; }
.status .lat { font-size: 11px; }

.info { flex: none; height: 41px; padding-top: 4px; background: #16171a; border-bottom: 1px solid #08090a; display: grid;
  grid-template-columns: 171px 98px 98px 98px 98px 100px 100px 98px 98px 100px 100px 98px 98px 140px; }
.info div { height: 34px; border-right: 1px solid #67696b; display: flex; flex-direction: column; align-items: center; gap: 2px; white-space: nowrap; }
.info span { font-size: 9px; line-height: 15px; color: #a9abad; }
.info b { color: #fff; font: bold 12px/17px "Liberation Sans", "Noto Sans CJK JP", sans-serif; }
.info .l b { align-self: flex-start; padding-left: 8px; }
.info .l b, .info .alg b { font-size: 11px; }
.info .n b { display: grid; grid-template-columns: 17px 17px 17px 14px; align-self: flex-end; padding-right: 4px; }
.info .n i:last-child { text-align: right; }
.info .v b { width: 100%; padding: 0 9px; display: flex; justify-content: space-between; }
.info em { color: #9b9da0; font-weight: 400; }
.overview { flex: none; height: 28px; background: #25282b; padding-left: 4px; }
.view { width: 31px; height: 28px; background: #8b8c8e; border: 1px solid #b9babb; border-left: 5px solid #9b9c9e; }

main { flex: 1; min-height: 0; display: flex; padding: 5px 4px 0; gap: 6px; }

/* channel strip */
.channel { width: 79px; flex: none; border: 2px solid #58595b; border-bottom: 0; border-radius: 8px 8px 0 0; background: #25282b; padding: 0 7px; display: flex; flex-direction: column; }
.channel h2 { text-align: center; font-size: 11px; font-weight: 600; color: #fff; line-height: 20px; margin-bottom: 9px; }
.tag { height: 19px; flex: none; margin: 0 1px; background: #6b6d6f; border: 1px solid #808284; border-radius: 2px; color: #e8e8e8; font-weight: 700; font-size: 11px; }
.eq { height: 60px; margin: 8px 0 18px; background: linear-gradient(#4a98cc, #4a98cc) 0 50% / 100% 2px no-repeat #060708; flex: none; }
.split { justify-content: space-between; }
.split span { padding-left: 4px; }
.split .ic { width: 19px; height: 13px; border-left: 1px solid #858789; }
.slot { height: 17px; margin: 8px 2px 22px; border: 1px solid #131516; border-radius: 2px; flex: none; }
.slot.tall { height: 35px; margin-bottom: auto; }
.grip { display: flex; gap: 2px; align-items: center; height: 4px; margin-bottom: 2px; flex: none; }
.grip i { flex: 1; height: 2px; background: #6d6f71; }
.grip u { width: 22px; height: 2px; background: repeating-linear-gradient(90deg, #fff 0 4px, transparent 4px 6px); }
.quad { display: grid; grid-template-columns: 1fr 1fr; grid-auto-rows: 18px; gap: 1px; padding: 1px; background: #121314; border-radius: 2px; flex: none; }
.quad > * { background: #2a2d30; font: bold 13px/18px "Liberation Sans", sans-serif; color: #b8babb; text-align: center; }
.quad .ic { width: 13px; height: 13px; }
.pan { height: 33px; margin: 5px 1px 8px; background: #191b1c; border: 1px solid #121314; border-radius: 3px; text-align: center; display: flex; flex-direction: column; align-items: center; flex: none; font-size: 10px; line-height: 11px; color: #fff; }
.pan i { width: 4px; height: 18px; background: #eee; margin-top: 2px; }
.faders { display: flex; gap: 4px; margin: 0 1px 6px; height: 261px; flex: none; }
.faders > div { flex: 1; background: #1b1d1e; border: 1px solid #151718; border-radius: 3px; }
.faders .fader { padding: 19px 0 14px; display: flex; justify-content: center; background: linear-gradient(#0b0c0d, #0b0c0d) 50% 18px / 3px 228px no-repeat, repeating-linear-gradient(transparent 0 29px, #55585a 29px 30px) 20px 16px / 6px 210px no-repeat #1b1d1e; }
.fader input { appearance: none; writing-mode: vertical-lr; direction: rtl; width: 18px; height: 226px; margin: 0; background: none; }
.fader input::-webkit-slider-thumb { appearance: none; width: 18px; height: 45px; border-radius: 1px; background: linear-gradient(#3eaef2 0 5px, #a9dbf7 5px 14px, #74bfe9 14px 15px, #d3eefd 15px 21px, #222 21px 23px, #e9f7fe 23px 30px, #9ad3f3 30px 31px, #fff 31px 39px, #2ba4ef 39px); }
.meter { display: flex; flex-direction: column; align-items: center; gap: 15px; padding-top: 16px; font-size: 9px; color: #808284; }
.meter span { line-height: 16px; }
.meter span::before { content: "- "; color: #4f5153; }
.meter span::after { content: " -"; color: #4f5153; }
.meter .f { margin: 4px 0 -7px; }
.vals span { font: 11px/18px "Open Sans", sans-serif; }
.vals .pk { background: #3b3e41; }
.rw { margin-top: 4px; }
.rec { background: #dd3b3b !important; color: #260606 !important; }
.chno { display: flex; justify-content: space-between; align-items: center; padding: 0 10px 0 4px; height: 22px; margin: 3px 0 1px; flex: none; }
.chno .ic { width: 12px; height: 12px; }
.chname { height: 34px; background: #76787a; color: #f0f0f0; font-size: 10px; line-height: 14px; padding: 2px 0 0 4px; white-space: nowrap; overflow: hidden; margin-bottom: 4px; flex: none; }

/* project window */
.center { flex: 1; min-width: 0; display: flex; flex-direction: column; }
.project { flex: 1 1 431px; min-height: 0; margin-bottom: 5px; border: 2px solid #fff; border-radius: 8px; background: #25282b; display: flex; padding: 4px 3px 3px 4px; }
.tracks { width: 519px; display: flex; flex-direction: column; flex: none; position: relative; }
.add { height: 19px; width: 51px; margin: 0 0 6px -1px; align-self: flex-start; }
.add .ic { width: 15px; height: 15px; }
.row { display: flex; background: #a2a4a3; color: #1c1d1e; border-right: 11px solid #000; }
.row .num { width: 40px; background: #7b7d7e; display: flex; align-items: flex-start; justify-content: space-between; padding: 5px 4px 0 3px; }
.row .num span { font-size: 11px; }
.io { height: 20px; border-top: 1px solid #777; background: #1c1f21; color: #d8d8d8; font-size: 11px; line-height: 18px; }
.row.io .num { padding-top: 2px; color: #111; background: #6b6e70; }
.io > span { padding-left: 10px; }
.trk { height: 46px; border-top: 1px solid #000; border-bottom: 1px solid #000; }
.tb { display: flex; height: 19px; border: 1px solid #555; border-radius: 2px; }
.tb button { width: 23px; font: bold 12px/16px "Liberation Sans", sans-serif; color: #222; }
.tb .ic { width: 13px; height: 13px; }
.ms { margin: 2px 9px 0 5px; flex: none; }
.nm { font: 13px/20px "Liberation Sans", sans-serif; padding: 1px 0 1px 3px; }
.btns { display: flex; gap: 2px; }
.det { margin-left: -3px; }
.ms button { width: 24px; }
.foot { margin-top: auto; display: flex; align-items: center; gap: 14px; padding: 0 6px 0 7px; font-size: 11px; color: #b4b6b7; height: 20px; }
.foot b { margin-left: auto; font-size: 10px; color: #777; }
.foot .ic { width: 13px; height: 13px; color: #85878a; }
.divider { width: 5px; flex: none; border-left: 2px solid #606264; margin-left: 1px; position: relative; }
.divider::after { content: ""; position: absolute; left: -2px; top: 197px; height: 26px; width: 2px; background: repeating-linear-gradient(#fff 0 3px, #25282b 3px 6px); }
.arrange { flex: 1; min-width: 0; display: flex; flex-direction: column; position: relative; }
.ruler { height: 25px; flex: none; overflow: hidden; background: #1a1c1e; display: flex; padding-left: 6px; position: relative; }
.ruler > * { width: 168px; flex: none; height: 25px; padding-top: 10px; line-height: 16px; font-size: 11px; font-family: "Liberation Mono", monospace; color: #e4e4e4; background: linear-gradient(#b0b0b0, #b0b0b0) 0 0 / 1px 9px no-repeat, repeating-linear-gradient(90deg, #5c5e60 0 1px, transparent 1px 42px) 0 0 / 100% 9px no-repeat; }
.ruler b { border-left: 1px solid #fff; padding-left: 4px; font: bold 12px/16px "Open Sans", sans-serif; }
.ruler::before { content: ""; position: absolute; left: -1px; top: 0; border: 8px solid transparent; border-top: 9px solid #fff; border-bottom: 0; z-index: 1; }
.canvas { flex: 1; min-height: 0; position: relative; overflow: hidden; background:
  linear-gradient(#36393c, #36393c) 0 19px / 100% 1px no-repeat, linear-gradient(#36393c, #36393c) 0 65px / 100% 1px no-repeat,
  repeating-linear-gradient(90deg, #76787a 0 1px, transparent 1px 672px) 6px 0,
  repeating-linear-gradient(90deg, #4c4f52 0 1px, transparent 1px 168px) 6px 0,
  repeating-linear-gradient(90deg, #313437 0 1px, transparent 1px 21px) 6px 0, #23272a; }
.event { position: absolute; left: 342px; right: 0; top: 22px; height: 42px; border: 1px solid #77787c; border-right: 0; background: repeating-linear-gradient(90deg, transparent 0 20px, #232345 20px 21px), #14142c; }
.event svg { width: 100%; height: 40px; display: block; }
.event span { position: absolute; left: 4px; top: 0; font: bold 11px/16px "Liberation Sans", sans-serif; color: #efeff5; background: #1d1d34; padding-right: 4px; }
.event::before { content: ""; position: absolute; left: 0; top: 1px; border: 3px solid transparent; border-left-color: #fff; border-top-color: #fff; z-index: 1; }
.event::after { content: ""; position: absolute; left: -1px; bottom: -1px; width: 8px; height: 8px; background: #999; border: 1px solid #000; }
.playhead { position: absolute; left: 321px; top: 0; bottom: 12px; width: 1px; background: #fff; }
.hbar { display: flex; height: 12px; gap: 3px; flex: none; font-size: 16px; line-height: 10px; color: #fff; }
.hscroll { flex: 1; display: flex; align-items: center; background: #434547; border-radius: 2px; padding: 0 6px 0 4px; }
.hscroll i { width: 12px; text-align: center; height: 12px; }
.hscroll i:last-child { margin-left: auto; }
.hscroll u { width: 28px; height: 9px; border-radius: 3px; background: #f1f2f3; }
.full u { flex: 1; }
.hscroll.full { padding: 0 3px 0 2px; }
.full i:first-child { margin-right: 4px; }
.full i:last-child { margin-left: 6px; }
.drop { width: 12px; height: 12px; background: #434547; font-size: 8px; border-radius: 2px; color: #f0f0f0; flex: none; }
.drop .ic { width: 9px; height: 9px; }
.drop.tall { height: 22px; border: 1px solid #606264; font-size: 9px; }
.hz { width: 84px; background: #434547; border-radius: 2px; display: flex; align-items: center; padding: 0 2px; }
.hz i, .vz i { font-weight: 700; width: 12px; height: 12px; text-align: center; flex: none; font-size: 15px; line-height: 10px; color: #fff; }
.hz input { appearance: none; flex: 1; min-width: 0; height: 8px; margin: 0; background: linear-gradient(#85878a, #85878a) 50% / 100% 2px no-repeat; }
.hz input::-webkit-slider-thumb, .vz input::-webkit-slider-thumb { appearance: none; width: 8px; height: 8px; border-radius: 4px; background: #fff; }
.vbar { width: 12px; flex: none; display: flex; flex-direction: column; gap: 3px; }
.vz { background: #434547; border-radius: 2px; display: flex; flex-direction: column; align-items: center; flex: none; padding: 4px 0; }
.vz.first { height: 48px; }
.vz.z { height: 84px; padding: 1px 0; margin-bottom: 12px; }
.vz input { appearance: none; writing-mode: vertical-lr; direction: rtl; flex: 1; min-height: 0; width: 8px; margin: 0; background: linear-gradient(#85878a, #85878a) 50% / 2px 100% no-repeat; }
.vscroll { flex: 1; min-height: 0; background: #3a3d3f; border-radius: 2px; display: flex; flex-direction: column; justify-content: space-between; align-items: center; color: #777; font-size: 8px; line-height: 12px; }

/* sample editor */
.editor { flex: 1 1 393px; min-height: 0; border: 2px solid #606264; border-radius: 8px; background: #25282b; display: flex; flex-direction: column; padding: 7px 6px; }
.etools { display: flex; gap: 5px; height: 32px; flex: none; }
.mid { display: flex; gap: 5px; margin-left: 348px; }
.volt { width: 5px; margin: 1px 0 0 -1px; font-size: 8px; color: #fff; }
.eye { margin-left: 6px; }
.file { margin-left: 15px; }
.end { margin-left: auto; }
.ebody { flex: 1; min-height: 0; display: flex; }
.scale { width: 40px; flex: none; display: flex; flex-direction: column; background: #191a1e; margin-bottom: 12px; }
.db { height: 25px; flex: none; background: #020202; display: flex; justify-content: flex-end; align-items: center; gap: 9px; font: bold 11px/16px "Open Sans", sans-serif; }
.db b { font-size: 9px; color: #888; }
.scale .vals { flex: 1; display: flex; flex-direction: column; justify-content: space-between; text-align: right; padding-right: 5px; }
.scale .vals span { font-size: 10px; line-height: 16px; }
.second { border-top: 1px solid #e0e0e0; }
.sample { flex: 1; min-width: 0; display: flex; flex-direction: column; }
.bars { display: flex; height: 25px; flex: none; background: #1a1c1e; position: relative; }
.bars span { flex: 4 1 0; min-width: 0; height: 24px; border-left: 1px solid #fff; padding: 8px 0 0 4px; font-weight: 700; font-size: 12px; color: #fff; }
.bars .last { flex: 3 1 0; }
.bars::before { content: ""; position: absolute; left: 2px; top: 0; border-left: 7px solid #fff; border-bottom: 7px solid transparent; }
.wavearea { flex: 1; position: relative; background: #121315; border-left: 1px solid #fff; min-height: 0; margin-left: 2px; }
.region { width: 27px; height: 100%; background: #23282b; border-left: 2px dotted #44706a; border-right: 2px dotted #505456; display: flex; flex-direction: column; }
.lane { flex: 1; background: linear-gradient(#66696b, #66696b) 0 50% / 100% 1px no-repeat; position: relative; }
.lane::after { content: ""; position: absolute; left: -2px; top: calc(50% - 5px); border: 5px solid transparent; border-left: 7px solid #777; }
.lane + .lane { border-top: 1px solid #050505; }
.mk { position: absolute; background: #3d5c83; color: #fff; font-size: 11px; line-height: 15px; height: 15px; padding: 0 2px; left: 0; white-space: nowrap; }
.mk.start { top: 0; } .mk.stop { top: 16px; left: -3px; padding: 0 4px 0 2px; } .mk.s { top: calc(50% - 8px); padding: 0 4px; }
.mk.start { font-size: 10px; }
.editor .hz { width: 80px; }
.editor .vz.z { height: 80px; }

.tabs { height: 15px; flex: none; display: flex; overflow: hidden; color: #d0d0d0; font-size: 10px; font-weight: 700; line-height: 20px; white-space: nowrap; }
.tabs .lat { font-size: 11px; }
.tabs .x { width: 18px; height: 20px; font-size: 14px; flex: none; }
.tabs a { text-align: center; }
.tabs .t1 { width: 109px; border-right: 2px solid #58595b; border-radius: 0 5px 0 0; }
.tabs .cur { width: 83px; background: #111213; color: #fff; }
.rest { border-left: 2px solid #58595b; border-radius: 5px 0 0 0; display: flex; gap: 40px; padding-left: 18px; flex: 1; }

/* media browser */
.media { width: 229px; flex: none; display: flex; flex-direction: column; }
.mtabs { height: 24px; margin-bottom: -2px; flex: none; display: flex; padding-left: 1px; font-weight: 700; z-index: 1; color: #fff; }
.mtabs a { width: 67px; text-align: center; line-height: 22px; font-size: 12px; }
.mtabs .cur { width: 83px; font-size: 11px; border: 2px solid #58595b; border-bottom: 0; border-radius: 4px 4px 0 0; background: #25282b; }
.mbody { flex: 1; min-height: 0; border: 2px solid #58595b; border-bottom: 0; border-radius: 8px 8px 0 0; background: #25282b; padding: 7px 7px 10px 6px; display: flex; flex-direction: column; font-size: 11px; }
.line { display: flex; gap: 3px; height: 20px; flex: none; }
.search { flex: 1; display: flex; align-items: center; background: #16181a; border: 1px solid #4c4f51; border-radius: 2px; padding-left: 3px; min-width: 0; }
.search .ic { width: 12px; height: 12px; }
.search input { flex: 1; min-width: 0; background: none; border: 0; font-style: italic; padding: 0 5px; outline: 0; }
.search input::placeholder { color: #9a9c9e; }
.mb { width: 25px; border: 1px solid #505254; border-radius: 2px; background: #434547; display: flex; justify-content: center; }
.mb .ic { width: 13px; height: 13px; }
.mb .ic.big { width: 16px; height: 15px; }
.dim { color: #777; }
.mb.dk { background: #16181a; } .mb.lit { background: #d8d9d9; color: #222; }
.path { display: flex; align-items: center; gap: 4px; height: 31px; border-bottom: 1px solid #76787a; flex: none; padding-bottom: 1px; white-space: nowrap; color: #eee; }
.path button { width: 20px; height: 20px; background: #34373a; border-radius: 2px; }
.path button .ic { width: 14px; height: 14px; }
.path i { font-size: 7px; margin-right: 3px; }
.path span { font-size: 11px; margin-right: 4px; }
.types { margin-top: 3px; height: 19px; }
.sel.box { border: 1px solid #5a5c5e; border-radius: 2px; background: #16181a; height: 19px; font-size: 10px; padding-left: 4px; }
.sel.box::after { font-size: 8px; right: 4px; }
.types .sel.box { flex: 1; font-size: 9px; padding-left: 3px; }
.filters { display: grid; grid-template-columns: 64px 64px 66px; gap: 6px; padding: 9px 0 0 2px; flex: none; font-weight: 700; color: #f4f4f4; }
.filters .sel { font-weight: 400; color: #c8c8c8; }
.filters ul { height: 87px; margin-top: 2px; overflow: hidden; padding-left: 2px; border-right: 8px solid transparent; font-size: 11px; font-weight: 700; white-space: nowrap; position: relative; background: linear-gradient(#f0f1f2, #f0f1f2) 100% 0 / 6px 31px no-repeat border-box, linear-gradient(#55585a, #55585a) 100% 0 / 6px 86px no-repeat border-box; }
.filters li { line-height: 19px; overflow: hidden; }
.results { margin-top: 7px; flex: 1; min-height: 0; display: flex; flex-direction: column; }
.rhead { height: 16px; background: #434547; flex: none; padding-left: 4px; margin-left: 1px; line-height: 16px; display: flex; gap: 5px; color: #e8e8e8; }
.rhead i { color: #888; }
.rwrap { display: flex; flex: 1; min-height: 0; padding: 2px 1px 0 0; }
.rlist { flex: 1; overflow: hidden; margin-right: 2px; }
.rlist table { border-collapse: collapse; width: 100%; font-weight: 700; color: #f4f4f4; }
.rlist tr { height: 19px; }
.rlist td { padding: 0; height: 19px; line-height: 16px; box-shadow: inset 0 -1px #393c3f; }
.rlist td:first-child { width: 26px; padding-left: 1px; }
.rlist .hit td { background: #bcbdbf; color: #000; }
.rscroll { width: 6px; border-radius: 3px; background: linear-gradient(#f0f1f2, #f0f1f2) 0 63% / 6px 30px no-repeat #55585a; }
.rh { height: 6px; margin: 1px 9px 5px 1px; border-radius: 3px; background: linear-gradient(90deg, #f0f1f2 0 39%, #55585a 39%); flex: none; }
.preview { height: 74px; flex: none; background: #17191b; border-radius: 4px; padding: 4px 5px; }
.preview svg { width: 100%; height: 46px; display: block; }
.marks { display: flex; justify-content: space-between; margin: -16px 0 2px; padding-left: 5px; font-size: 10px; }
.preview p { text-align: right; font-size: 10px; padding-right: 4px; }
.pctl { display: flex; gap: 3px; margin: 11px 5px 0; flex: none; }
.pctl .grp { height: 19px; }
.pctl .ic { width: 12px; height: 12px; }
.pctl .vol { flex: 1; align-items: center; gap: 5px; padding: 0 4px 0 2px; }
.vol input { appearance: none; flex: 1; min-width: 0; height: 9px; margin: 0; background: linear-gradient(90deg, #5aa5e4 0 66%, #3a3c3e 66%) 50% / 100% 5px no-repeat; }
.vol input::-webkit-slider-thumb { appearance: none; width: 9px; height: 9px; border-radius: 5px; background: #e8e8e8; }
.low { justify-content: space-between; color: #777; }
.low .grp { color: #77797b; }
.low .grp .wt { color: #e4e4e4; }
.key button:last-child { width: 11px; margin: 0 6px; font-size: 8px; }

/* Windows taskbar */
.taskbar { height: 49px; flex: none; border-top: 1px solid #b9bbbd; background: linear-gradient(90deg, #dedfe1, #dadddf 60%, #d8dbde); color: #222; display: flex; justify-content: space-between; position: relative; }
.weather { display: flex; align-items: center; gap: 5px; padding: 0 0 0 17px; width: 396px; }
.weather svg { width: 28px; height: 28px; margin-top: -3px; }
.badge { font-size: 10px; fill: #fff; } .pp { font-size: 11px; font-weight: 700; fill: #fff; }
.weather p, .tray p { display: flex; flex-direction: column; font-size: 11px; }
.weather p span:last-child { color: #55585a; font-size: 10px; }
.apps { display: flex; align-items: center; }
.apps button { width: 44px; height: 40px; position: relative; border-radius: 4px; margin-bottom: 1px; flex: none; }
.apps button svg { width: 24px; height: 24px; }
.apps button:first-child { width: 48px; }
.tsearch { width: 218px; height: 31px; border-radius: 16px; background: #f7f8f9; border: 1px solid #c6c8ca; display: flex; align-items: center; padding: 0 3px 0 10px; margin: 0 2px 0 1px; }
.tsearch input { flex: 1; min-width: 0; background: none; border: 0; font-size: 13px; padding: 0 10px; outline: 0; }
.tsearch input::placeholder { color: #55585a; }
.deco { width: 46px; height: 30px; flex: none; }
.run::after { content: ""; position: absolute; bottom: 1px; left: 19px; width: 6px; height: 3px; border-radius: 2px; background: #7c7e80; }
.apps .alert { background: #e4aaa8; width: 40px; margin-left: 2px; margin-right: 2px; }
.alert::after { left: 17px; background: #b3261e; }
.alert i { position: absolute; right: 4px; top: 3px; width: 14px; height: 14px; border-radius: 7px; border: 4px solid #dd5350; background: #fff; }
.pf { position: absolute; right: 3px; top: 2px; width: 16px; height: 16px; border-radius: 8px; border: 6px solid #771f92; background: #c9a0d8; }
.apps .green { background: linear-gradient(90deg, #dadddf, #c8edcd); }
.apps .green2 { background: linear-gradient(90deg, #c8edcd, #d3e8d6); }
.cur.run::after { left: 14px; width: 16px; background: #1f6f86; }
.tray { display: flex; align-items: center; gap: 16px; width: 400px; justify-content: flex-end; padding-right: 19px; }
.tray svg { width: 16px; height: 16px; flex: none; }
.tray .ball { margin: 0 6px; }
.tray .wifi { margin-right: -6px; }
.tray p { text-align: right; margin: 0 -9px 0 2px; }
```
FILE: script.js
```js
// Draws the two decaying channels of the audio event.
var seed = 7;
function rnd() { seed = (seed * 16807) % 2147483647; return seed / 2147483647; }
function channel(cy, start) {
  var top = [], bottom = [];
  for (var x = start; x <= 702; x += 2) {
    var amp = 1 + 4 * Math.exp(-x / 260);
    top.push(x + ',' + (cy - amp * (0.6 + 0.6 * rnd())).toFixed(1));
    bottom.unshift(x + ',' + (cy + amp * (0.6 + 0.6 * rnd())).toFixed(1));
  }
  return '<polygon fill="#8e8f93" points="' + top.concat(bottom).join(' ') + '"/>';
}
document.getElementById('clip').innerHTML =
  channel(10, 2) + channel(30, 24) +
  '<path fill="#8e8f93" d="M0 26h12v8H0z"/><path fill="#d5d5dc" d="M13 34l9-6v6z"/>';
```
